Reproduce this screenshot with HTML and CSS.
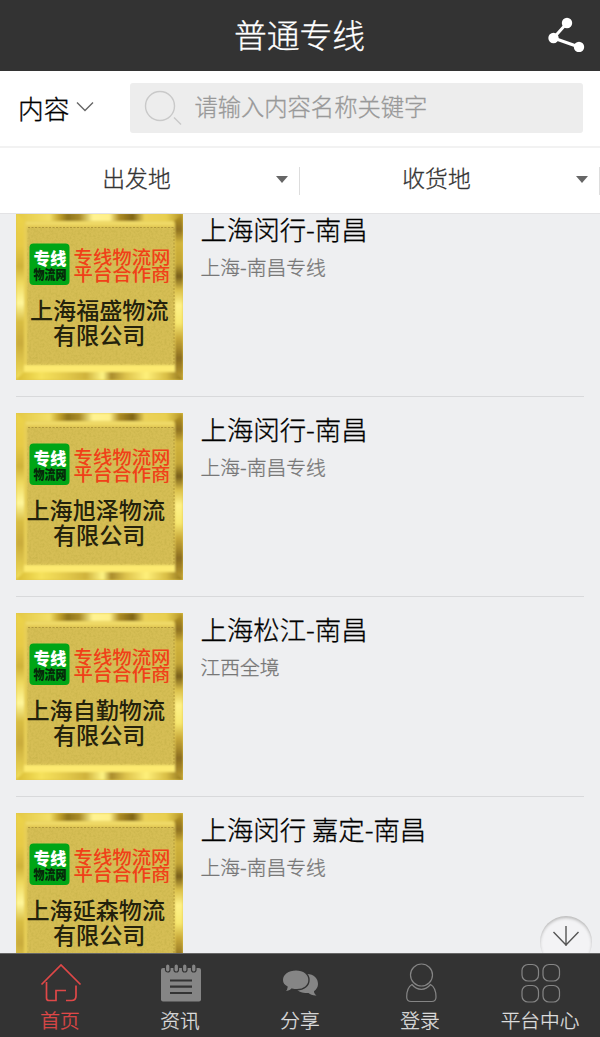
FILE: index.html
```html
<!DOCTYPE html>
<html lang="zh-CN">
<head>
<meta charset="utf-8">
<title>普通专线</title>
<link rel="stylesheet" href="styles.css">
</head>
<body>
<svg class="defs" width="0" height="0" aria-hidden="true">
  <defs>
    <linearGradient id="edgeTop"><stop offset="0" stop-color="#e3c845"/><stop offset=".2" stop-color="#f3df68"/><stop offset=".26" stop-color="#c0a02c"/><stop offset=".31" stop-color="#8f741c"/><stop offset=".38" stop-color="#a98c2a"/><stop offset=".46" stop-color="#fff391"/><stop offset=".56" stop-color="#fff08a"/><stop offset=".62" stop-color="#ac8b25"/><stop offset=".7" stop-color="#7f6416"/><stop offset=".77" stop-color="#ecd259"/><stop offset=".9" stop-color="#e8cf50"/><stop offset="1" stop-color="#b09024"/></linearGradient>
    <linearGradient id="edgeBottom"><stop offset="0" stop-color="#d8bb33"/><stop offset=".15" stop-color="#f6e25c"/><stop offset=".3" stop-color="#e3ca4c"/><stop offset=".42" stop-color="#cfb23c"/><stop offset=".52" stop-color="#fff584"/><stop offset=".57" stop-color="#a98b2b"/><stop offset=".66" stop-color="#ddc34c"/><stop offset=".78" stop-color="#fff07a"/><stop offset=".9" stop-color="#d9be45"/><stop offset="1" stop-color="#8e711a"/></linearGradient>
    <linearGradient id="edgeLeft" x2="0" y2="1"><stop offset="0" stop-color="#ecd34a"/><stop offset=".2" stop-color="#e6ca46"/><stop offset=".32" stop-color="#cfb23a"/><stop offset=".42" stop-color="#efda60"/><stop offset=".54" stop-color="#fff79c"/><stop offset=".65" stop-color="#d8bd43"/><stop offset=".78" stop-color="#c9ab3c"/><stop offset="1" stop-color="#f3df59"/></linearGradient>
    <linearGradient id="edgeRight" x2="0" y2="1"><stop offset="0" stop-color="#bb9b27"/><stop offset=".1" stop-color="#8e7020"/><stop offset=".18" stop-color="#d2b53d"/><stop offset=".3" stop-color="#c3a536"/><stop offset=".38" stop-color="#775d19"/><stop offset=".46" stop-color="#d9be49"/><stop offset=".55" stop-color="#fff288"/><stop offset=".66" stop-color="#f7e770"/><stop offset=".75" stop-color="#c8a93a"/><stop offset=".87" stop-color="#8a6c1f"/><stop offset="1" stop-color="#c3a334"/></linearGradient>
    <filter id="grain" x="0" y="0" width="1" height="1"><feTurbulence type="fractalNoise" baseFrequency=".45" numOctaves="2" seed="4"/><feColorMatrix values="0 0 0 0 .5  0 0 0 0 .4  0 0 0 0 .05  .9 0 0 0 -.34"/></filter>
    <filter id="soft" x="0" y="0" width="1" height="1"><feGaussianBlur stdDeviation=".8"/></filter>
    <g id="plaque">
      <rect width="167" height="167" fill="#dfc548"/>
      <g filter="url(#soft)">
        <path d="M0 0h10v158L0 167z" fill="url(#edgeLeft)"/>
        <path d="M0 0h167l-9 8H9z" fill="url(#edgeTop)"/>
        <path d="M167 0v167l-9-7V8z" fill="url(#edgeRight)"/>
        <path d="M0 167l9-9h149l9 9z" fill="url(#edgeBottom)"/>
        <rect x="8" y="9" width="151" height="149" fill="#e8cf57"/>
        <path d="M8 159h151v-7H8z" fill="#fdea70"/>
        <path d="M10 10h147" stroke="#f0dc6c" stroke-width="3"/>
        <rect x="11" y="14" width="147" height="138" fill="#d6be54"/>
      </g>
      <rect x="11" y="14" width="147" height="138" filter="url(#grain)"/>
      <path d="M12 14.500h146v137" fill="none" stroke="#b0963a" stroke-dasharray="2 1.5"/>
      <rect x="13.5" y="30.5" width="40" height="41.5" rx="4" fill="#00a516"/>
      <g class="badge-text"><text x="17.5" y="52" fill="#fff" textLength="33" lengthAdjust="spacingAndGlyphs">专线</text><text transform="translate(17.5 66) scale(1 .75)" fill="#06270a" textLength="33" lengthAdjust="spacingAndGlyphs">物流网</text></g>
      <g class="partner-text"><text transform="translate(57.5 51) scale(1 .94)">专线物流网</text><text transform="translate(57.5 68) scale(1 .94)">平台合作商</text></g>
      <text class="company-text" x="37" y="131">有限公司</text>
    </g>
  </defs>
</svg>
<div class="app">
  <header class="header">
    <h1 class="title">普通专线</h1>
    <svg class="share" width="38" height="38" viewBox="0 0 38 38"><path d="M19 9L5.500 24l25.500 9" fill="none" stroke="#fff" stroke-width="3"/><g fill="#fff"><circle cx="19" cy="9" r="5.200"/><circle cx="5.500" cy="24" r="5.200"/><circle cx="31" cy="33" r="5.200"/></g></svg>
  </header>
  <div class="search">
    <span class="scope">内容</span>
    <svg class="chevron" width="18" height="12" viewBox="0 0 18 12"><path d="M1 1.5l8 8 8-8" fill="none" stroke="#666" stroke-width="1.4"/></svg>
    <div class="field">
      <svg width="38" height="36" viewBox="0 0 38 36"><g fill="none" stroke="#c9c9c9" stroke-width="1.4"><circle cx="16" cy="16" r="14.5"/><path d="M30 27.5l7 7"/></g></svg>
      <span>请输入内容名称关键字</span>
    </div>
  </div>
  <div class="filters">
    <div class="filter"><span>出发地</span><i class="caret"></i></div>
    <div class="filter"><span>收货地</span><i class="caret"></i></div>
  </div>
  <main class="list">
    <article class="item">
      <svg class="thumb" viewBox="0 0 167 167"><use href="#plaque"/><text class="company-text" x="14" y="106">上海福盛物流</text></svg>
      <div class="info"><h2>上海闵行-南昌</h2><p>上海-南昌专线</p></div>
    </article>
    <article class="item">
      <svg class="thumb" viewBox="0 0 167 167"><use href="#plaque"/><text class="company-text" x="10.5" y="106">上海旭泽物流</text></svg>
      <div class="info"><h2>上海闵行-南昌</h2><p>上海-南昌专线</p></div>
    </article>
    <article class="item">
      <svg class="thumb" viewBox="0 0 167 167"><use href="#plaque"/><text class="company-text" x="10.5" y="106">上海自勤物流</text></svg>
      <div class="info"><h2>上海松江-南昌</h2><p>江西全境</p></div>
    </article>
    <article class="item">
      <svg class="thumb" viewBox="0 0 167 167"><use href="#plaque"/><text class="company-text" x="10.5" y="106">上海延森物流</text></svg>
      <div class="info"><h2>上海闵行 嘉定-南昌</h2><p>上海-南昌专线</p></div>
    </article>
    <div class="down"><svg width="28" height="22" viewBox="0 0 28 22"><path d="M14 0v20M1.500 6L14 19l12.500-13" fill="none" stroke="#555" stroke-width="1.400"/></svg></div>
  </main>
  <nav class="nav">
    <a class="tab active"><svg width="42" height="42" viewBox="0 0 42 42"><path d="M1.500 22.500L21 3l19.500 19.500M6.500 20v16q0 2.500 2.500 2.500h7V28.500h10M36 23.500V34q0 4.500-4.500 4.500H26" fill="none" stroke="#e04848" stroke-width="1.700"/></svg><span>首页</span></a>
    <a class="tab"><svg width="42" height="42" viewBox="0 0 42 42"><rect x="1" y="6" width="40" height="33.500" rx="2" fill="#858585"/><g fill="#858585" stroke="#333" stroke-width="1.200"><rect x="5.500" y="2" width="4.500" height="8" rx="2.200"/><rect x="14" y="2" width="4.500" height="8" rx="2.200"/><rect x="22.500" y="2" width="4.500" height="8" rx="2.200"/><rect x="31.500" y="2" width="4.500" height="8" rx="2.200"/></g><path d="M10 18.500h22M10 24.700h22M10 31h22" stroke="#333" stroke-width="2.200"/></svg><span>资讯</span></a>
    <a class="tab"><svg width="42" height="42" viewBox="0 0 42 42"><path d="M27 12c7 0 11 4.500 11 10 0 3-1.500 5.500-4 7.200 0 1.800.8 3 2.500 4.300-3.500.3-6-.8-8-2.500-5 .4-10-1-12-4z" fill="#858585"/><path d="M16 7.800c8 0 13 4.500 13 10.200s-5 9.700-12 9.700c-2 0-3.500-.2-5-.6-2 2-4.500 3-8 3 2-1.500 3-3.200 3-5.200C4 23.500 2.300 21 2.300 18 2.300 12.300 8 7.800 16 7.800z" fill="#858585" stroke="#333" stroke-width="1.400"/></svg><span>分享</span></a>
    <a class="tab"><svg width="42" height="42" viewBox="0 0 42 42"><g fill="none" stroke="#858585" stroke-width="1.200"><circle cx="21.500" cy="13" r="11"/><path d="M12 22.500C8.500 24.500 6.700 30 6.700 35c0 2.800 1.500 4.500 4.500 4.500h20.500c3 0 4.300-1.700 4.300-4.500 0-5-2-10.500-5.500-12.500-2.500 3-5.500 4.800-9.200 4.800S14.500 25.500 12 22.500z"/></g></svg><span>登录</span></a>
    <a class="tab"><svg width="42" height="42" viewBox="0 0 42 42"><g fill="none" stroke="#858585" stroke-width="1.200"><rect x="2" y="2.500" width="16.500" height="16.500" rx="6"/><rect x="23" y="2.500" width="16.500" height="16.500" rx="6"/><rect x="2" y="23.500" width="16.500" height="16.500" rx="6"/><rect x="23" y="23.500" width="16.500" height="16.500" rx="6"/></g></svg><span>平台中心</span></a>
  </nav>
</div>
</body>
</html>
```
FILE: styles.css
```css
* { box-sizing: border-box; }
body { margin: 0; font-family: "Noto Sans CJK SC", sans-serif; font-weight: 300; -webkit-text-stroke: .3px; }
svg { display: block; flex: none; -webkit-text-stroke: 0; }
.defs { position: absolute; }
h1, h2, p { margin: 0; font-weight: 300; }
.app { width: 600px; height: 1037px; display: flex; flex-direction: column; background: #fff; overflow: hidden; }
.header { height: 71px; flex: none; background: #333; color: #fff; display: grid; grid-template-columns: 1fr auto 1fr; align-items: center; padding: 0 14px 4px; }
.title { grid-column: 2; font-size: 32.8px; line-height: 48px; margin-left: -1px; }
.share { justify-self: end; margin-top: -2px; }
.search { height: 77px; flex: none; display: flex; align-items: center; padding: 0 17px 1px 18px; border-bottom: 2px solid #f2f2f2; }
.scope { font-size: 25.7px; line-height: 36px; color: #000; }
.chevron { margin: -3px 36px 0 7px; }
.field { flex: 1; height: 50px; border-radius: 3px; background: #ededed; display: flex; align-items: center; gap: 12px; padding-left: 14px; color: #999; font-size: 23.3px; line-height: 34px; }
.field span { padding-bottom: 4px; }
.filters { height: 65px; flex: none; display: flex; align-items: center; }
.filter { flex: 1; height: 28px; border-right: 1px solid #ddd; display: flex; align-items: center; color: #333; font-size: 22.8px; line-height: 28px; }
.filter span { flex: 1; text-align: center; padding: 0 3px 5px 0; }
.caret { border: 6.5px solid transparent; border-top: 7px solid #666; border-bottom: 0; margin: -2px 11px 0 0; }
.list { flex: 1; min-height: 0; position: relative; overflow: hidden; background: #eeeff1; border-top: 1px solid #e3e3e5; padding: 0 16px; }
.item { height: 200px; padding: 16px 0; border-bottom: 1px solid #d8d9db; display: flex; gap: 17.5px; }
.item:first-child { height: 183px; padding: 0; }
.item:first-child .thumb { margin-top: -1px; }
.item:first-child .info { margin-top: -1px; }
.thumb { width: 167px; height: 167px; }
.info h2 { font-size: 26.4px; line-height: 32px; color: #000; }
.info p { margin-top: 8px; font-size: 19.8px; line-height: 28px; color: #777; }
.company-text { font-size: 23.1px; font-weight: 500; fill: #24220c; }
.partner-text { font-size: 19.4px; font-weight: 500; fill: #f04018; }
.badge-text { font-size: 17px; font-weight: 900; }
.down { position: absolute; right: 8px; top: 702px; width: 52px; height: 52px; border-radius: 50%; background: #f3f3f5; box-shadow: inset 0 2px 3px #bbb; display: flex; justify-content: center; padding-top: 10px; }
.nav { height: 84px; flex: none; background: #333; border-top: 1px solid #666; display: flex; }
.tab { flex: 1; display: flex; flex-direction: column; align-items: center; padding-top: 8px; color: #ddd; font-size: 19.7px; line-height: 28px; }
.tab svg { margin-left: 2px; }
.tab span { margin-top: 2px; white-space: nowrap; }
.active { color: #e04848; }
```
